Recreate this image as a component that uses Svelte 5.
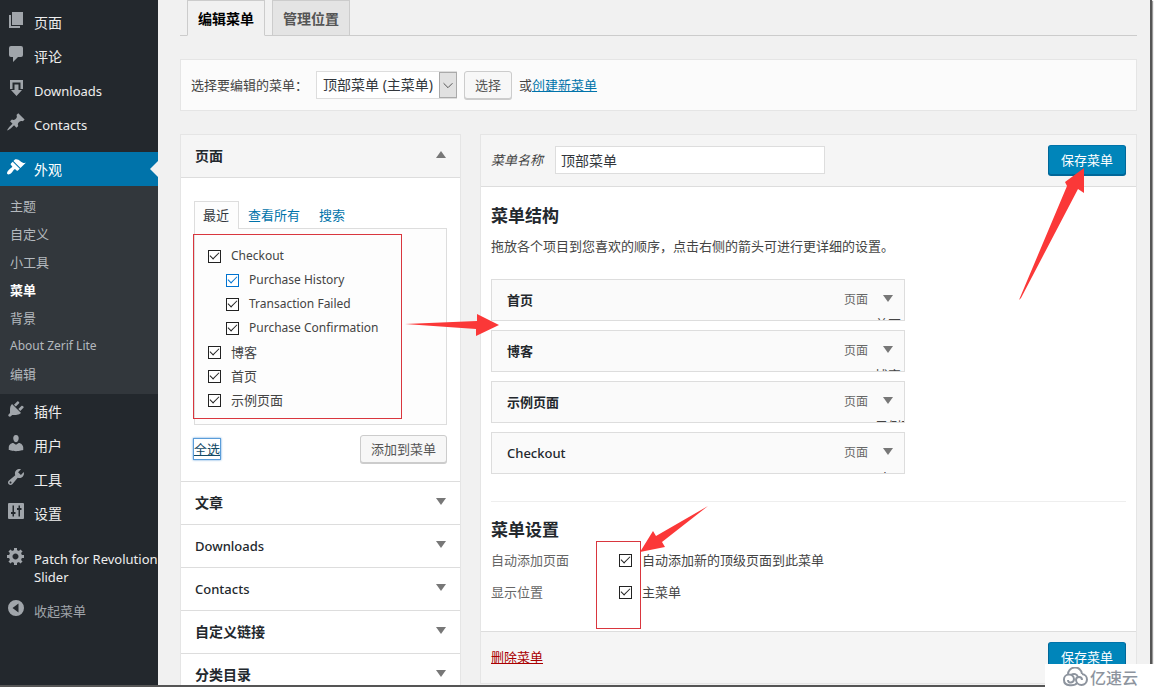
<script lang="ts">
	type NavItem = { label: string; icon: string; current?: boolean; gap?: boolean };

	const navTop: NavItem[] = [
		{ label: '页面', icon: 'pages' },
		{ label: '评论', icon: 'comments' },
		{ label: 'Downloads', icon: 'download' },
		{ label: 'Contacts', icon: 'pin' },
		{ label: '外观', icon: 'brush', current: true, gap: true }
	];

	const submenu = ['主题', '自定义', '小工具', '菜单', '背景', 'About Zerif Lite', '编辑'];

	const navBottom: NavItem[] = [
		{ label: '插件', icon: 'plug' },
		{ label: '用户', icon: 'user' },
		{ label: '工具', icon: 'wrench' },
		{ label: '设置', icon: 'sliders' },
		{ label: 'Patch for Revolution Slider', icon: 'gear', gap: true }
	];

	let pages = $state([
		{ title: 'Checkout', checked: true, child: false, focus: false },
		{ title: 'Purchase History', checked: true, child: true, focus: true },
		{ title: 'Transaction Failed', checked: true, child: true, focus: false },
		{ title: 'Purchase Confirmation', checked: true, child: true, focus: false },
		{ title: '博客', checked: true, child: false, focus: false },
		{ title: '首页', checked: true, child: false, focus: false },
		{ title: '示例页面', checked: true, child: false, focus: false }
	]);

	const sections = ['文章', 'Downloads', 'Contacts', '自定义链接', '分类目录'];
	const menuItems = ['首页', '博客', '示例页面', 'Checkout'];

	let menuName = $state('顶部菜单');
	let autoAdd = $state(true);
	let primary = $state(true);

	function selectAll() {
		const all = pages.every((p) => p.checked);
		pages.forEach((p) => (p.checked = !all));
	}

	const hasLatin = (s: string) => /^[A-Z]/.test(s);
</script>

{#snippet icon(name: string)}
	<svg class="icon" viewBox="0 0 20 20" aria-hidden="true">
		{#if name === 'pages'}
			<path d="M6 2h11v13H6zM3 5h2v11h9v2H3z" />
		{:else if name === 'comments'}
			<path d="M5 2h10q2 0 2 2v7q0 2-2 2h-3l-5 5v-5H5q-2 0-2-2V4q0-2 2-2z" />
		{:else if name === 'download'}
			<path d="M4 2h13v9h-2.500V4.500h-8V11H4zM8.500 6.500h4V12H16l-5.500 6L5 12h3.500z" />
		{:else if name === 'pin'}
			<path d="M10.440 3.020l1.820-1.820 6.360 6.350-1.830 1.820c-1.050-.680-2.480-.570-3.410.360l-.750.750c-.920.930-1.040 2.350-.350 3.410l-1.830 1.820-2.410-2.410-2.800 2.790c-.420.420-3.380 2.710-3.800 2.290s1.860-3.390 2.280-3.810l2.790-2.790L4.100 9.360l1.830-1.820c1.050.690 2.480.570 3.400-.360l.750-.750c.930-.920 1.050-2.350.360-3.410z" />
		{:else if name === 'brush'}
			<path d="M14.480 11.060L7.410 3.990l1.500-1.500c.5-.56 2.300-.47 3.510.320 1.210.800 1.430 1.280 2.910 2.100 1.180.640 2.450 1.260 4.450.850zm-.71.710L6.700 4.700 4.930 6.470c-.39.390-.39 1.020 0 1.410l1.060 1.060c.39.390.39 1.030 0 1.420-.6.600-1.430 1.110-2.210 1.690-.35.260-.7.530-1.010.840C1.430 14.230.400 16.080 1.400 17.070c.99 1 2.840-.03 4.180-1.360.31-.31.580-.66.850-1.020.57-.78 1.080-1.610 1.690-2.210.39-.39 1.020-.39 1.410 0l1.060 1.060c.39.390 1.020.39 1.410 0z" />
		{:else if name === 'plug'}
			<path d="M13.110 4.360L9.870 7.600 8 5.730l3.240-3.240c.35-.34 1.050-.2 1.560.320.520.510.660 1.210.310 1.550zm-8 1.770l.910-1.120 9.010 9.010-1.190.840c-.71.710-2.630 1.160-3.820 1.160H6.140L4.900 17.260c-.59.590-1.540.59-2.120 0-.59-.58-.59-1.530 0-2.120l1.240-1.240v-3.880c0-1.130.4-3.190 1.090-3.890zm7.260 3.970l3.240-3.240c.34-.35 1.040-.21 1.550.310.520.510.660 1.210.310 1.550l-3.240 3.250z" />
		{:else if name === 'user'}
			<path d="M10 9.250c-2.270 0-2.730-3.440-2.730-3.440C7 4.020 7.820 2 9.970 2c2.160 0 2.980 2.020 2.710 3.810 0 0-.41 3.440-2.680 3.440zm0 2.570L12.720 10c2.390 0 4.520 2.330 4.520 4.530v2.490s-3.650 1.130-7.240 1.130c-3.650 0-7.240-1.130-7.240-1.130v-2.490c0-2.250 1.940-4.480 4.470-4.480z" />
		{:else if name === 'wrench'}
			<path d="M16.680 9.770c-1.340 1.340-3.300 1.670-4.950.990l-5.410 6.520c-.99.990-2.590.99-3.580 0s-.99-2.590 0-3.570l6.520-5.420c-.68-1.650-.35-3.610.990-4.950 1.280-1.280 3.120-1.620 4.720-1.060l-2.890 2.890 2.820 2.820 2.860-2.870c.53 1.580.180 3.390-1.080 4.650zM3.810 16.210c.4.390 1.040.39 1.430 0 .4-.4.400-1.040 0-1.430-.39-.4-1.030-.4-1.430 0-.39.390-.39 1.030 0 1.430z" />
		{:else if name === 'sliders'}
			<path fill-rule="evenodd" d="M3 2h14q1 0 1 1v14q0 1-1 1H3q-1 0-1-1V3q0-1 1-1zM6.500 4.500V11H5v2h1.500v2.500H8V13h1.500v-2H8V4.500zM12.500 4.500V7H11v2h1.500v6.500H14V9h1.500V7H14V4.500z" />
		{:else if name === 'gear'}
			<path fill-rule="evenodd" d="M18 12h-2.180c-.17.700-.44 1.350-.81 1.930l1.540 1.540-2.100 2.100-1.540-1.540c-.58.360-1.230.63-1.910.79V19H8v-2.180c-.68-.16-1.330-.43-1.910-.79l-1.540 1.540-2.120-2.120 1.540-1.540c-.36-.58-.63-1.230-.79-1.910H1V9.030h2.170c.16-.7.440-1.350.80-1.940L2.430 5.550l2.100-2.100 1.540 1.540c.58-.37 1.240-.64 1.930-.81V2h3v2.180c.68.160 1.330.43 1.910.79l1.540-1.540 2.120 2.120-1.540 1.540c.36.590.64 1.240.80 1.940H18zm-8.500 1.500c1.660 0 3-1.340 3-3s-1.340-3-3-3-3 1.340-3 3 1.340 3 3 3z" />
		{:else if name === 'collapse'}
			<path fill-rule="evenodd" d="M10 2a8 8 0 1 1 0 16 8 8 0 0 1 0-16zM12.500 5.500L6.500 10l6 4.500z" />
		{/if}
	</svg>
{/snippet}

{#snippet navLink(item: NavItem)}
	<li class:gap={item.gap}>
		<a
			href="#top"
			class="nav-link"
			class:current={item.current}
			class:latin={hasLatin(item.label)}
		>
			{@render icon(item.icon)}
			<span>{item.label}</span>
		</a>
	</li>
{/snippet}

<div class="window">
	<nav class="sidebar">
		<ul>
			{#each navTop as item}
				{@render navLink(item)}
			{/each}
		</ul>
		<ul class="submenu">
			{#each submenu as label}
				<li>
					<a href="#top" class:active={label === '菜单'} class:latin={hasLatin(label)}>{label}</a>
				</li>
			{/each}
		</ul>
		<ul>
			{#each navBottom as item}
				{@render navLink(item)}
			{/each}
		</ul>
		<button type="button" class="nav-link collapse">
			{@render icon('collapse')}
			<span>收起菜单</span>
		</button>
	</nav>

	<main class="content">
		<div class="nav-tabs">
			<a href="#edit" class="nav-tab nav-tab-active">编辑菜单</a>
			<a href="#locations" class="nav-tab">管理位置</a>
		</div>

		<form class="manage-menus">
			<label for="menu-select">选择要编辑的菜单：</label>
			<span class="select-wrap">
				<select id="menu-select">
					<option>顶部菜单 (主菜单)</option>
				</select>
				<svg class="select-arrow" viewBox="0 0 18 26" aria-hidden="true">
					<path d="M4 11l5 5 5-5" />
				</svg>
			</span>
			<button type="button" class="button">选择</button>
			<span class="or">或<a href="#new">创建新菜单</a></span>
		</form>

		<div class="columns">
			<div class="accordion">
				<section class="open">
					<h3>
						<button type="button"><span>页面</span><i class="caret up"></i></button>
					</h3>
					<div class="section-body">
						<div class="tabs">
							<a href="#recent" class="tab-active">最近</a>
							<a href="#all">查看所有</a>
							<a href="#search">搜索</a>
						</div>
						<div class="tabs-panel">
							{#each pages as page}
								<label class:child={page.child} class:latin={hasLatin(page.title)}>
									<input type="checkbox" class:focus={page.focus} bind:checked={page.checked} />
									<span>{page.title}</span>
								</label>
							{/each}
							<div class="mark mark-pages"></div>
							<svg class="arrow arrow-pages" viewBox="0 0 94 24" aria-hidden="true">
								<path d="M0 11L72 8V1l22 11-23 11v-7z" />
							</svg>
						</div>
						<div class="actions">
							<a href="#all" class="select-all" onclick={selectAll}>全选</a>
							<button type="button" class="button">添加到菜单</button>
						</div>
					</div>
				</section>
				{#each sections as title}
					<section>
						<h3>
							<button type="button" class:latin={hasLatin(title)}>
								<span>{title}</span><i class="caret"></i>
							</button>
						</h3>
					</section>
				{/each}
			</div>

			<form class="menu-edit">
				<header>
					<label for="menu-name">菜单名称</label>
					<input id="menu-name" type="text" bind:value={menuName} />
					<button type="button" class="button primary">保存菜单</button>
					<svg class="arrow arrow-save" viewBox="0 0 68 132" aria-hidden="true">
						<path d="M65 0v25l-6-4L2 130l-2 2L48 18l-2-4z" />
					</svg>
				</header>
				<div class="post-body">
					<h2>菜单结构</h2>
					<p>拖放各个项目到您喜欢的顺序，点击右侧的箭头可进行更详细的设置。</p>
					<ul class="menu-items">
						{#each menuItems as title}
							<li>
								<span class="item-title" class:latin={hasLatin(title)}>{title}</span>
								<span class="item-type">页面</span>
								<button type="button" class="item-edit">
									<i class="caret"></i>
									<span class="item-edit-text">{title}</span>
								</button>
							</li>
						{/each}
					</ul>
					<div class="menu-settings">
						<h2>菜单设置</h2>
						<dl>
							<dt>自动添加页面</dt>
							<dd>
								<input id="auto-add" type="checkbox" bind:checked={autoAdd} />
								<label for="auto-add">自动添加新的顶级页面到此菜单</label>
							</dd>
							<dt>显示位置</dt>
							<dd>
								<input id="primary" type="checkbox" bind:checked={primary} />
								<label for="primary">主菜单</label>
							</dd>
						</dl>
						<div class="mark mark-settings"></div>
						<svg class="arrow arrow-settings" viewBox="0 0 68 48" aria-hidden="true">
							<path d="M68 0L22 36l3 5L0 46l13-21 3 5z" />
						</svg>
					</div>
				</div>
				<footer>
					<a href="#delete" class="delete">删除菜单</a>
					<button type="button" class="button primary">保存菜单</button>
				</footer>
			</form>
		</div>
	</main>
</div>

<div class="watermark">
	<svg viewBox="0 0 26 20" aria-hidden="true">
		<path d="M6 8a7 7 0 0 1 14-1M20 7a5.500 5.500 0 1 1-6 6c0-2 1-3 3-3s3 1 3 3M15 16c-2 3-13 4-13-3a5 5 0 0 1 10-1c0 4-6 5-6 1M9 8c3-2 6-1 7 2" />
	</svg>
	<span>亿速云</span>
</div>

<style>
	:global(body) {
		margin: 0;
		background: #fff;
	}

	.window {
		display: flex;
		box-sizing: border-box;
		height: calc(100vh - 2px);
		margin-right: 2px;
		overflow: hidden;
		border-right: 2px solid #555;
		border-bottom: 2px solid #555;
		box-shadow: 1px 1px 1px #999;
		background: #f1f1f1;
		color: #444;
		font-family: 'Noto Sans', 'Noto Sans CJK SC', sans-serif;
		font-size: 13px;
		line-height: 18px;
	}

	button,
	input,
	select {
		font: inherit;
		color: inherit;
	}

	ul {
		list-style: none;
		margin: 0;
		padding: 0;
	}

	h2,
	h3 {
		margin: 0;
		color: #23282d;
	}

	a {
		color: #0073aa;
	}

	/* sidebar */
	.sidebar {
		width: 158px;
		flex-shrink: 0;
		padding-top: 5px;
		background: #23282d;
	}

	.sidebar a {
		text-decoration: none;
	}

	.nav-link {
		display: flex;
		position: relative;
		box-sizing: border-box;
		width: 100%;
		padding: 9px 0 7px 6px;
		gap: 8px;
		border: 0;
		background: none;
		color: #eee;
		font-size: 14px;
		line-height: 18px;
		text-align: left;
	}

	.nav-link.latin {
		font-size: 13px;
	}

	.nav-link span {
		margin-right: -4px;
	}

	.gap {
		padding-top: 11px;
	}

	.nav-link.current {
		background: #0073aa;
		color: #fff;
	}

	.nav-link.current::after {
		content: '';
		position: absolute;
		right: 0;
		top: 9px;
		border: 8px solid transparent;
		border-left: 0;
		border-right-color: #f1f1f1;
	}

	.icon {
		width: 20px;
		height: 20px;
		flex-shrink: 0;
		margin-top: -4px;
		fill: #a0a5aa;
	}

	.current .icon {
		fill: #fff;
	}

	.submenu {
		padding: 6px 0;
		background: #32373c;
	}

	.submenu a {
		display: block;
		padding: 0 10px;
		color: #b4b9be;
		line-height: 28px;
	}

	.submenu .latin {
		font-size: 12px;
	}

	.submenu .active {
		color: #fff;
		font-weight: 700;
	}

	.collapse {
		color: #a0a5aa;
		font-size: 13px;
	}

	/* content */
	.content {
		flex: 1;
		min-width: 0;
		padding: 0 13px 0 22px;
	}

	.nav-tabs {
		display: flex;
		gap: 7px;
		padding-left: 7px;
		border-bottom: 1px solid #ccc;
	}

	.nav-tab {
		padding: 7px 10px 5px;
		margin-bottom: -1px;
		border: 1px solid #ccc;
		background: #e4e4e4;
		color: #555;
		font-size: 14px;
		font-weight: 700;
		line-height: 22px;
		text-decoration: none;
	}

	.nav-tab-active {
		border-bottom-color: #f1f1f1;
		background: #f1f1f1;
		color: #000;
	}

	.manage-menus {
		display: flex;
		align-items: center;
		margin-top: 23px;
		padding: 11px 10px;
		border: 1px solid #e5e5e5;
		background: #fbfbfb;
	}

	.select-wrap {
		position: relative;
		margin: 0 7px 0 8px;
	}

	select {
		appearance: none;
		box-sizing: border-box;
		height: 28px;
		padding: 0 22px 0 6px;
		border: 1px solid #ddd;
		border-radius: 0;
		background: #fff;
		color: #32373c;
		font-size: 14px;
	}

	.select-arrow {
		position: absolute;
		top: 1px;
		right: 0;
		box-sizing: border-box;
		width: 18px;
		height: 26px;
		border: 1px solid #aaa;
		background: #e1e1e1;
		fill: none;
		stroke: #444;
		pointer-events: none;
	}

	.button {
		box-sizing: border-box;
		height: 28px;
		padding: 0 10px;
		border: 1px solid #ccc;
		border-radius: 3px;
		background: #f7f7f7;
		box-shadow: 0 1px 0 #ccc;
		color: #555;
		line-height: 24px;
	}

	.button.primary {
		height: 30px;
		padding: 0 12px;
		margin-left: auto;
		border-color: #0073aa #006799 #006799;
		background: #0085ba;
		box-shadow: 0 1px 0 #006799;
		color: #fff;
	}

	.or {
		margin-left: 7px;
	}

	.columns {
		display: flex;
		align-items: flex-start;
		gap: 19px;
		margin-top: 23px;
	}

	/* left column */
	.accordion {
		box-sizing: border-box;
		width: 281px;
		flex-shrink: 0;
		border: 1px solid #e5e5e5;
		background: #fff;
	}

	.accordion section {
		border-bottom: 1px solid #ddd;
	}

	.accordion h3 button {
		display: flex;
		justify-content: space-between;
		align-items: center;
		width: 100%;
		height: 42px;
		padding: 0 14px;
		border: 0;
		background: none;
		font-size: 14px;
		font-weight: 700;
	}

	.accordion .open h3 button {
		border-bottom: 1px solid #ddd;
		height: 43px;
		background: #f5f5f5;
	}

	.accordion h3 .latin {
		font-size: 13px;
		font-weight: 500;
	}

	.item-title.latin {
		font-weight: 500;
	}

	.caret {
		border: 5px solid transparent;
		border-top: 7px solid #777;
		border-bottom: 0;
		margin-bottom: 4px;
	}

	.caret.up {
		border-top: 0;
		border-bottom: 7px solid #777;
	}

	.section-body {
		padding: 23px 13px 18px;
	}

	.tabs {
		display: flex;
	}

	.tabs a {
		padding: 3px 9px;
		border: 1px solid transparent;
		border-bottom: 0;
		line-height: 20px;
		text-decoration: none;
	}

	.tabs a.tab-active {
		margin-bottom: -1px;
		padding-left: 8px;
		position: relative;
		z-index: 1;
		border-color: #ddd;
		background: #fdfdfd;
		color: #32373c;
	}

	.tabs a:nth-child(2) {
		padding: 3px 8px;
	}

	.tabs-panel {
		position: relative;
		padding: 15px 13px 12px;
		border: 1px solid #ddd;
		background: #fdfdfd;
	}

	.tabs-panel label {
		display: flex;
		align-items: center;
		gap: 10px;
		height: 24px;
	}

	.tabs-panel .latin {
		font-size: 12px;
	}

	.tabs-panel .child {
		padding-left: 18px;
	}

	input[type='checkbox'] {
		appearance: none;
		box-sizing: border-box;
		width: 13px;
		height: 13px;
		flex-shrink: 0;
		margin: 0;
		border: 1px solid #222;
		background: #fff;
		color: #222;
	}

	input[type='checkbox']:checked::before {
		content: '';
		display: block;
		width: 8px;
		height: 4px;
		margin: 1px 0 0 1px;
		border: solid currentColor;
		border-width: 0 0 1px 1px;
		transform: rotate(-45deg);
	}

	input[type='checkbox'].focus {
		border-color: #0073d0;
		color: #0073d0;
	}

	.actions {
		display: flex;
		justify-content: space-between;
		align-items: center;
		margin-top: 10px;
	}

	.select-all {
		padding: 1px 0;
		outline: 1px solid #5b9dd9;
		box-shadow: 0 0 2px 1px #5b9dd9;
		color: #124964;
	}

	/* right column */
	.menu-edit {
		flex: 1;
		min-width: 0;
		border: 1px solid #e5e5e5;
		background: #fff;
	}

	header,
	footer {
		display: flex;
		position: relative;
		align-items: center;
		padding: 10px 10px 11px;
		background: #f5f5f5;
	}

	header {
		border-bottom: 1px solid #ddd;
	}

	footer {
		border-top: 1px solid #ddd;
	}

	header label {
		font-style: italic;
	}

	header input {
		box-sizing: border-box;
		width: 270px;
		height: 28px;
		margin-left: 12px;
		padding: 0 5px;
		border: 1px solid #ddd;
		background: #fff;
		color: #32373c;
		font-size: 14px;
	}

	.post-body {
		padding: 18px 10px 27px;
	}

	h2 {
		font-size: 17px;
		line-height: 22px;
	}

	p {
		margin: 10px 0 0;
	}

	.menu-items {
		display: grid;
		gap: 9px;
		margin-top: 24px;
		max-width: 414px;
	}

	.menu-items li {
		display: flex;
		position: relative;
		align-items: center;
		box-sizing: border-box;
		height: 42px;
		padding-left: 15px;
		overflow: hidden;
		border: 1px solid #ddd;
		background: #fafafa;
	}

	.item-title {
		color: #23282d;
		font-weight: 700;
	}

	.item-type {
		margin-left: auto;
		color: #666;
		font-size: 12px;
	}

	.item-edit {
		display: flex;
		width: 36px;
		padding: 0 0 0 15px;
		border: 0;
		background: none;
	}

	/* sits below the fold of the bar, only its top edge shows */
	.item-edit-text {
		position: absolute;
		top: 35px;
		left: 383px;
		white-space: nowrap;
	}

	.menu-settings {
		position: relative;
		margin-top: 27px;
		padding-top: 17px;
		border-top: 1px solid #eee;
	}

	dl {
		display: grid;
		grid-template-columns: 128px 1fr;
		row-gap: 8px;
		margin: 7px 0 0;
		line-height: 24px;
	}

	dt {
		color: #666;
	}

	dd {
		display: flex;
		align-items: center;
		gap: 10px;
		margin: 0;
	}

	.delete {
		color: #a00;
	}

	/* hand-drawn marks */
	.mark,
	.arrow {
		position: absolute;
		z-index: 2;
		pointer-events: none;
	}

	.mark {
		box-sizing: border-box;
		border: 1px solid #d9363e;
	}

	.arrow {
		fill: #fb3838;
	}

	.mark-pages {
		top: 5px;
		left: -2px;
		width: 209px;
		height: 185px;
	}

	.arrow-pages {
		top: 84px;
		left: 210px;
		width: 94px;
		height: 24px;
	}

	.arrow-save {
		top: 33px;
		right: 49px;
		width: 68px;
		height: 132px;
	}

	.mark-settings {
		top: 39px;
		left: 105px;
		width: 45px;
		height: 88px;
	}

	.arrow-settings {
		top: 4px;
		left: 149px;
		width: 68px;
		height: 48px;
	}

	.watermark {
		display: flex;
		position: fixed;
		right: 0;
		bottom: 0;
		align-items: center;
		box-sizing: border-box;
		width: 109px;
		height: 25px;
		padding-left: 17px;
		gap: 2px;
		background: #fff;
		color: #8d949e;
		font: 500 16px/24px 'Noto Sans CJK SC', sans-serif;
	}

	.watermark svg {
		width: 26px;
		height: 20px;
		fill: none;
		stroke: currentColor;
		stroke-width: 2;
	}
</style>
